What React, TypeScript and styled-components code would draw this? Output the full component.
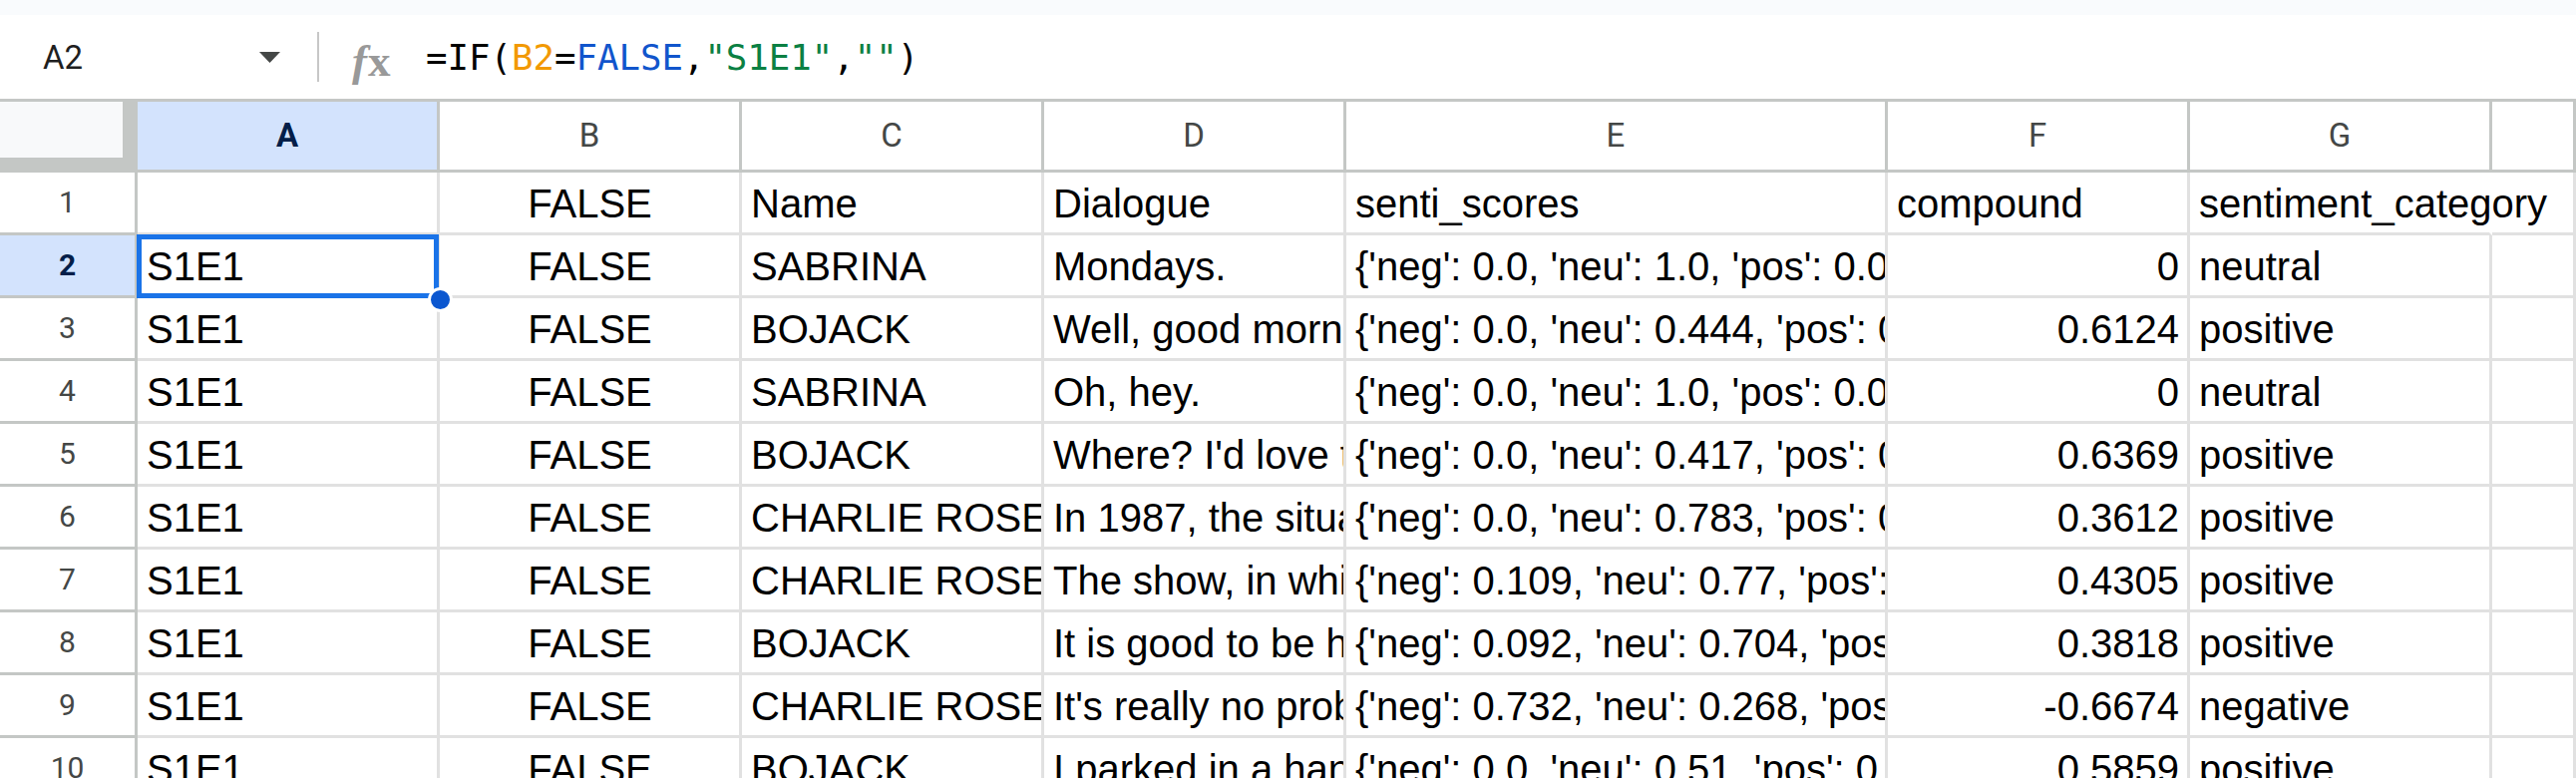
import React from "react";
import styled, { createGlobalStyle, css } from "styled-components";

const GlobalStyle = createGlobalStyle`
  html, body {
    margin: 0;
    padding: 0;
    background: #fff;
    overflow: hidden;
  }
  body {
    font-family: "Liberation Sans", Arial, sans-serif;
  }
`;

const COLUMNS = "138px 303px 303px 303px 303px 543px 303px 303px 1fr";

const Page = styled.div`
  width: 2583px;
  height: 780px;
  overflow: hidden;
  display: flex;
  flex-direction: column;
  background: #fff;
`;

const TopStrip = styled.div`
  flex: none;
  height: 15px;
  background: #f9fbfd;
`;

const FormulaBar = styled.div`
  flex: none;
  height: 84px;
  display: flex;
  align-items: center;
  background: #fff;
`;

const NameBox = styled.div`
  width: 318px;
  box-sizing: border-box;
  padding: 0 37px 0 43px;
  display: flex;
  align-items: center;
  justify-content: space-between;
  font-family: Roboto, "Liberation Sans", sans-serif;
  font-size: 33px;
  color: #1f1f1f;
`;

const Divider = styled.div`
  width: 2px;
  height: 50px;
  background: #c7c7c7;
`;

const FxLabel = styled.span`
  margin-left: 33px;
  width: 44px;
  display: flex;
  align-items: baseline;
  font-family: "Liberation Serif", serif;
  font-size: 45px;
  color: #999;
  line-height: 1;
  transform: translateY(4px);

  i {
    font-style: italic;
    font-weight: 700;
    margin-right: 1px;
  }
  b {
    font-weight: 700;
  }
`;

const FormulaText = styled.div`
  margin-left: 30px;
  font-family: "DejaVu Sans Mono", "Liberation Mono", monospace;
  font-size: 35.7px;
  color: #000;
  white-space: pre;
`;

const Token = styled.span<{ $color?: string }>`
  color: ${(p) => p.$color ?? "#000"};
`;

const Sheet = styled.div`
  flex: none;
  border-top: 3px solid #c4c7c5;
`;

const Row = styled.div<{ $header?: boolean }>`
  display: grid;
  grid-template-columns: ${COLUMNS};
  height: ${(p) => (p.$header ? 71 : 63)}px;
`;

const Corner = styled.div`
  box-sizing: border-box;
  background: #f8f9fa;
  border-right: 15px solid #c4c7c5;
  border-bottom: 15px solid #c4c7c5;
`;

const ColHeader = styled.div<{ $selected?: boolean }>`
  box-sizing: border-box;
  border-right: 3px solid #c4c7c5;
  border-bottom: 3px solid #c4c7c5;
  background: ${(p) => (p.$selected ? "#d3e3fd" : "#fff")};
  color: ${(p) => (p.$selected ? "#041e49" : "#444746")};
  font-weight: ${(p) => (p.$selected ? 700 : 400)};
  font-family: Roboto, "Liberation Sans", sans-serif;
  font-size: 33px;
  line-height: 68px;
  text-align: center;
`;

const RowHeader = styled.div<{ $selected?: boolean }>`
  box-sizing: border-box;
  border-right: 3px solid #c4c7c5;
  border-bottom: 3px solid #c4c7c5;
  background: ${(p) => (p.$selected ? "#d3e3fd" : "#fff")};
  color: ${(p) => (p.$selected ? "#041e49" : "#444746")};
  font-weight: ${(p) => (p.$selected ? 700 : 400)};
  font-family: Roboto, "Liberation Sans", sans-serif;
  font-size: 30px;
  line-height: 60px;
  text-align: center;
`;

type Align = "left" | "center" | "right";

const Cell = styled.div<{ $align?: Align; $active?: boolean; $spill?: boolean }>`
  box-sizing: border-box;
  border-right: 3px solid #e1e1e1;
  border-bottom: 3px solid #e1e1e1;
  padding: 3px 8px 0 9px;
  font-size: 40px;
  line-height: 57px;
  color: #000;
  white-space: nowrap;
  overflow: hidden;
  text-align: ${(p) => p.$align ?? "left"};

  ${(p) =>
    p.$spill &&
    css`
      overflow: visible;
      border-right-color: transparent;
      position: relative;
      z-index: 1;
    `}

  ${(p) =>
    p.$active &&
    css`
      overflow: visible;
      position: relative;
      z-index: 2;

      &::after {
        content: "";
        position: absolute;
        top: -1px;
        left: -1px;
        right: -2px;
        bottom: -3px;
        border: 5px solid #1a73e8;
        pointer-events: none;
      }
    `}
`;

const FillHandle = styled.span`
  position: absolute;
  right: -16px;
  bottom: -17px;
  width: 19px;
  height: 19px;
  border: 3px solid #fff;
  border-radius: 50%;
  background: #0b57d0;
  z-index: 3;
`;

type RowData = {
  n: number;
  a: string;
  b: string;
  c: string;
  d: string;
  e: string;
  f: string;
  g: string;
};

const rows: RowData[] = [
  { n: 1, a: "", b: "FALSE", c: "Name", d: "Dialogue", e: "senti_scores", f: "compound", g: "sentiment_category" },
  { n: 2, a: "S1E1", b: "FALSE", c: "SABRINA", d: "Mondays.", e: "{'neg': 0.0, 'neu': 1.0, 'pos': 0.0, 'compound': 0.0}", f: "0", g: "neutral" },
  { n: 3, a: "S1E1", b: "FALSE", c: "BOJACK", d: "Well, good morning, Sabrina.", e: "{'neg': 0.0, 'neu': 0.444, 'pos': 0.556, 'compound': 0.6124}", f: "0.6124", g: "positive" },
  { n: 4, a: "S1E1", b: "FALSE", c: "SABRINA", d: "Oh, hey.", e: "{'neg': 0.0, 'neu': 1.0, 'pos': 0.0, 'compound': 0.0}", f: "0", g: "neutral" },
  { n: 5, a: "S1E1", b: "FALSE", c: "BOJACK", d: "Where? I'd love to be there.", e: "{'neg': 0.0, 'neu': 0.417, 'pos': 0.583, 'compound': 0.6369}", f: "0.6369", g: "positive" },
  { n: 6, a: "S1E1", b: "FALSE", c: "CHARLIE ROSE", d: "In 1987, the situation comedy", e: "{'neg': 0.0, 'neu': 0.783, 'pos': 0.217, 'compound': 0.3612}", f: "0.3612", g: "positive" },
  { n: 7, a: "S1E1", b: "FALSE", c: "CHARLIE ROSE", d: "The show, in which", e: "{'neg': 0.109, 'neu': 0.77, 'pos': 0.121, 'compound': 0.4305}", f: "0.4305", g: "positive" },
  { n: 8, a: "S1E1", b: "FALSE", c: "BOJACK", d: "It is good to be here.", e: "{'neg': 0.092, 'neu': 0.704, 'pos': 0.204, 'compound': 0.3818}", f: "0.3818", g: "positive" },
  { n: 9, a: "S1E1", b: "FALSE", c: "CHARLIE ROSE", d: "It's really no problem.", e: "{'neg': 0.732, 'neu': 0.268, 'pos': 0.0, 'compound': -0.6674}", f: "-0.6674", g: "negative" },
  { n: 10, a: "S1E1", b: "FALSE", c: "BOJACK", d: "I parked in a handicapped spot.", e: "{'neg': 0.0, 'neu': 0.51, 'pos': 0.49, 'compound': 0.5859}", f: "0.5859", g: "positive" },
];

const columnLetters = ["A", "B", "C", "D", "E", "F", "G", "H"];

function Caret() {
  return (
    <svg width="21" height="11" viewBox="0 0 21 11">
      <polygon points="0,0 21,0 10.5,11" fill="#444746" />
    </svg>
  );
}

export default function App() {
  return (
    <Page>
      <GlobalStyle />
      <TopStrip />
      <FormulaBar>
        <NameBox>
          <span>A2</span>
          <Caret />
        </NameBox>
        <Divider />
        <FxLabel>
          <i>f</i>
          <b>x</b>
        </FxLabel>
        <FormulaText>
          <Token>=IF(</Token>
          <Token $color="#f29900">B2</Token>
          <Token>=</Token>
          <Token $color="#1155cc">FALSE</Token>
          <Token>,</Token>
          <Token $color="#0b8043">"S1E1"</Token>
          <Token>,</Token>
          <Token $color="#0b8043">""</Token>
          <Token>)</Token>
        </FormulaText>
      </FormulaBar>

      <Sheet>
        <Row $header>
          <Corner />
          {columnLetters.map((l, i) => (
            <ColHeader key={l} $selected={i === 0}>
              {l === "H" ? "" : l}
            </ColHeader>
          ))}
        </Row>

        {rows.map((r) => {
          const isActive = r.n === 2;
          const isTitle = r.n === 1;
          return (
            <Row key={r.n}>
              <RowHeader $selected={isActive}>{r.n}</RowHeader>
              <Cell $active={isActive}>
                {r.a}
                {isActive && <FillHandle />}
              </Cell>
              <Cell $align="center">{r.b}</Cell>
              <Cell>{r.c}</Cell>
              <Cell>{r.d}</Cell>
              <Cell>{r.e}</Cell>
              <Cell $align={isTitle ? "left" : "right"}>{r.f}</Cell>
              <Cell $spill={isTitle}>{r.g}</Cell>
              <Cell />
            </Row>
          );
        })}
      </Sheet>
    </Page>
  );
}
